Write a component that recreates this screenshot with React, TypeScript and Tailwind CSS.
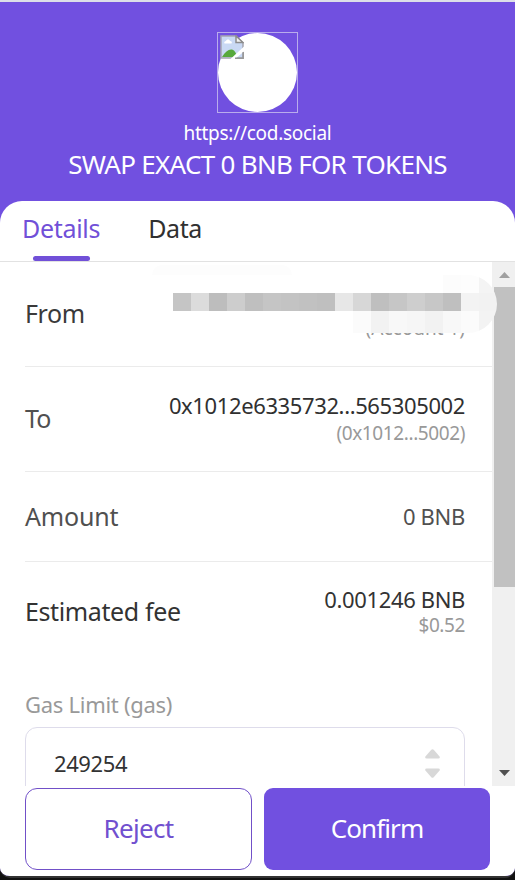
import type { ReactNode } from 'react';

const MASK_ROWS = [
  {
    height: 'h-[18px]',
    cells: [
      'bg-transparent', 'bg-transparent', 'bg-transparent', 'bg-transparent', 'bg-transparent', 'bg-transparent',
      'bg-transparent', 'bg-transparent', 'bg-transparent', 'bg-transparent', 'bg-transparent', 'bg-transparent',
      'bg-transparent', 'bg-transparent', 'bg-transparent', 'bg-[#fcfcfc]', 'bg-[#fdfdfd]', 'bg-[#f4f4f4]',
    ],
  },
  {
    height: 'h-[18px]',
    cells: [
      'bg-[#c5c5c5]', 'bg-[#dcdcdc]', 'bg-[#bdbdbd]', 'bg-[#cdcdcd]', 'bg-[#bfbfbf]', 'bg-[#c5c5c5]',
      'bg-[#c3c3c3]', 'bg-[#c1c1c1]', 'bg-[#bfbfbf]', 'bg-[#e7e7e7]', 'bg-[#d7d7d7]', 'bg-[#bfbfbf]',
      'bg-[#c6c6c6]', 'bg-[#cecece]', 'bg-[#c7c7c7]', 'bg-[#bfbfbf]', 'bg-[#f3f3f3]', 'bg-[#f2f2f2]',
    ],
  },
  {
    height: 'h-[22px]',
    cells: [
      'bg-transparent', 'bg-transparent', 'bg-transparent', 'bg-transparent', 'bg-transparent', 'bg-transparent',
      'bg-transparent', 'bg-transparent', 'bg-transparent', 'bg-transparent', 'bg-[#fbfbfb]', 'bg-[#f2f2f2]',
      'bg-[#f8f8f8]', 'bg-[#f6f6f6]', 'bg-[#f2f2f2]', 'bg-[#f8f8f8]', 'bg-[#fbfbfb]', 'bg-[#f3f3f3]',
    ],
  },
];

function AddressMask() {
  return (
    <div className="absolute left-[173px] top-[13px] z-10 overflow-hidden rounded-r-[29px]">
      {MASK_ROWS.map((row, i) => (
        <div key={i} className={`flex ${row.height}`}>
          {row.cells.map((cell, j) => (
            <div key={j} className={`w-[18px] ${cell}`} />
          ))}
        </div>
      ))}
    </div>
  );
}

function BrokenImage() {
  return (
    <svg width="24" height="24" viewBox="0 0 24 24" fill="none">
      <path d="M1 1H16L23 8V23H1Z" fill="#c9d9f4" stroke="#a5a5b0" strokeWidth="1.500" />
      <path d="M4.500 8.500c-1-1.500.5-2.500 1.500-2.500.5-2 3.500-2 4 0 1.500 0 2.500 1 1.500 2.500Z" fill="#fff" />
      <path d="M2 22C5 17 8 14.500 11 14.500s5 2.500 6 7.500Z" fill="#57a93c" />
      <path d="M16 1V7.500H23Z" fill="#f4f4f4" stroke="#8c8c8c" strokeWidth="1.500" />
      <path d="M10.500 24L24 11.500v5L15 24Z" fill="#fff" />
      <path d="M15 23.200h8.200V17" stroke="#999" strokeWidth="1.500" />
    </svg>
  );
}

interface RowProps {
  label: ReactNode;
  className: string;
  children: ReactNode;
}

function Row({ label, className, children }: RowProps) {
  return (
    <div className={`ml-[25px] flex items-center justify-between pr-[27px] ${className}`}>
      <span className="pb-[2px] text-[25px] leading-[30px]">{label}</span>
      <div className="flex flex-col items-end">{children}</div>
    </div>
  );
}

export default function App() {
  return (
    <div className="flex h-[880px] w-[515px] flex-col overflow-hidden bg-[#111] font-['Noto_Sans','Open_Sans',sans-serif] whitespace-nowrap">
      <div className="flex h-[878px] flex-col overflow-hidden rounded-b-[10px] border-b-2 border-[#333] bg-[#7150e0]">
        {/* Header */}
        <header className="flex h-[201px] shrink-0 flex-col items-center border-t-2 border-[#dcdfe8] pt-[30px] text-white">
          <div className="relative h-[81px] w-[81px] border border-[#b9acec]">
            <div className="h-full w-full rounded-full bg-white" />
            <div className="absolute left-[2px] top-[2px]">
              <BrokenImage />
            </div>
          </div>
          <p className="mt-[8px] text-[19px] leading-[24px] tracking-[-0.28px]">https://cod.social</p>
          <h1 className="mt-[2px] text-[26px] leading-[34px] tracking-[-0.7px]">SWAP EXACT 0 BNB FOR TOKENS</h1>
        </header>

        <main className="flex flex-1 flex-col overflow-hidden rounded-t-[22px] bg-white">
          {/* Tabs */}
          <nav className="flex h-[61px] shrink-0 gap-[48px] border-b border-[#e2e2e2] pl-[22px] text-[25px] leading-[30px]">
            <div className="flex flex-col items-center justify-between pt-[12px] text-[#7150d8]">
              <span className="tracking-[-0.3px]">Details</span>
              <div className="h-[5px] w-[57px] rounded-full bg-[#7150d8]" />
            </div>
            <div className="pt-[12px] tracking-[-0.4px] text-[#303030]">Data</div>
          </nav>

          <div className="flex h-[524px] shrink-0">
            <div className="relative w-[492px] overflow-hidden">
              <div className="absolute left-[152px] top-[3px] h-[10px] w-[140px] rounded-t-full bg-[#fdfdfd]" />
              <Row
                label={<span className="tracking-[-0.4px]">From</span>}
                className="h-[105px] border-b border-[#ebebeb] text-[#3a3a3a]"
              >
                <span className="h-[28px]" />
                <span className="text-[19px] leading-[27px] text-[#999]">(Account 1)</span>
              </Row>
              <Row
                label={<span className="tracking-[-1px]">To</span>}
                className="h-[105px] border-b border-[#ebebeb] text-[#505050]"
              >
                <span className="text-[22px] leading-[27px] tracking-[-0.38px] text-[#303030]">0x1012e6335732...565305002</span>
                <span className="text-[19px] leading-[28px] tracking-[-0.4px] text-[#999]">(0x1012...5002)</span>
              </Row>
              <Row
                label={<span className="tracking-[-0.2px]">Amount</span>}
                className="h-[90px] border-b border-[#ebebeb] text-[#505050]"
              >
                <span className="text-[22px] leading-[27px] tracking-[-0.3px]">0 BNB</span>
              </Row>
              <Row label={<span className="tracking-[-0.38px]">Estimated fee</span>} className="h-[100px] text-[#333]">
                <span className="text-[22px] leading-[25px] tracking-[-0.36px]">0.001246 BNB</span>
                <span className="text-[19px] leading-[26px] tracking-[-0.4px] text-[#999]">$0.52</span>
              </Row>

              {/* Gas limit */}
              <div className="ml-[25px] mt-[27px] w-[440px]">
                <label className="block text-[22px] leading-[30px] tracking-[-0.28px] text-[#999]">Gas Limit (gas)</label>
                <div className="mt-[8px] flex h-[74px] items-center justify-between rounded-[12px] border border-[#dedceb] pb-[2px] pl-[28px] pr-[24px] text-[#333]">
                  <span className="text-[22px] tracking-[-0.4px]">249254</span>
                  <svg width="15" height="29" viewBox="0 0 15 29" fill="#d8d8d8">
                    <path d="M6.300 0.700 0.400 7.600Q-0.300 9.300 1.500 9.500H13.500Q15.300 9.300 14.600 7.600L8.700 0.700Q7.500-.4 6.300.7Z" />
                    <path d="M6.300 28.300 0.400 21.400Q-0.300 19.700 1.500 19.500H13.500Q15.300 19.700 14.600 21.400L8.700 28.300Q7.500 29.400 6.300 28.300Z" />
                  </svg>
                </div>
              </div>
            </div>

            {/* Scrollbar */}
            <div className="flex w-[23px] flex-col bg-[#f0f0f0]">
              <div className="flex h-[25px] items-center pl-[7px]">
                <svg width="11" height="6" viewBox="0 0 11 6" fill="#a0a0a0">
                  <path d="M5.500 0 11 6H0Z" />
                </svg>
              </div>
              <div className="ml-[2px] h-[300px] bg-[#c1c1c1]" />
              <div className="flex flex-1 items-end pb-[10px] pl-[7px]">
                <svg width="11" height="6" viewBox="0 0 11 6" fill="#505050">
                  <path d="M0 0H11L5.500 6Z" />
                </svg>
              </div>
            </div>
            <div className="relative w-0">
              <div className="absolute -left-[515px] top-0">
                <AddressMask />
              </div>
            </div>
          </div>

          {/* Actions */}
          <footer className="mt-[2px] flex h-[82px] shrink-0 gap-[12px] pl-[25px] text-[26px]">
            <button className="w-[227px] rounded-[12px] border border-[#7150c8] pb-[2px] tracking-[-0.7px] text-[#7150cf]">Reject</button>
            <button className="w-[226px] rounded-[9px] bg-[#7150e0] pb-[2px] tracking-[-0.9px] text-white">Confirm</button>
          </footer>
        </main>
      </div>
    </div>
  );
}
